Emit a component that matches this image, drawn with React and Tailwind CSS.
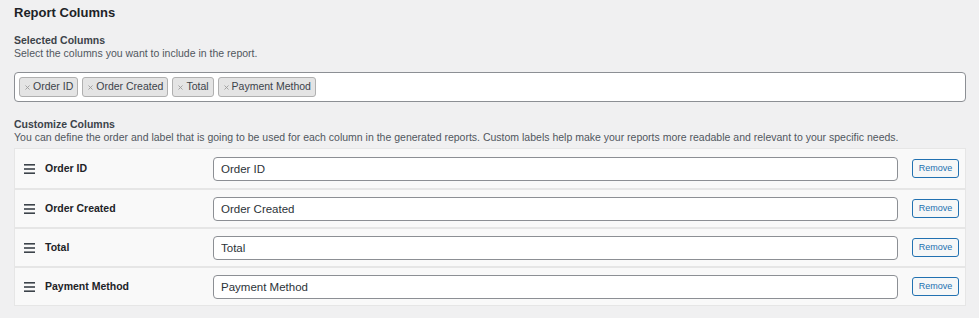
import { X } from "lucide-react";

const columns = ["Order ID", "Order Created", "Total", "Payment Method"];

function DragHandle() {
  return (
    <svg viewBox="0 0 11 10" className="w-[11px] h-[10px] flex-shrink-0" fill="#3c434a">
      <rect x="0" y="0" width="11" height="1.6" />
      <rect x="0" y="4.2" width="11" height="1.6" />
      <rect x="0" y="8.4" width="11" height="1.6" />
    </svg>
  );
}

export default function App() {
  return (
    <div
      className="w-[979px] h-[318px] bg-[#f0f0f1] text-[#1d2327] px-[14px] pt-[5px]"
      style={{ fontFamily: "'Liberation Sans', Arial, sans-serif" }}
    >
      <h2 className="text-[13px] font-bold leading-[16px]">Report Columns</h2>

      {/* Selected */}
      <div className="mt-[13px]">
        <div className="text-[10.5px] font-bold leading-[13px] text-[#3c434a]">Selected Columns</div>
        <div className="text-[10.5px] leading-[13px] text-[#50575e]">Select the columns you want to include in the report.</div>
        <div className="mt-[12px] w-[952px] h-[30px] bg-white border border-[#8c8f94] rounded-[4px] flex items-center gap-[4px] px-[4px]">
          {columns.map(c => (
            <span
              key={c}
              className="h-[20px] flex items-center gap-[2px] px-[4px] bg-[#e4e4e4] border border-[#b0b0b0] rounded-[3px] text-[10.5px] text-[#3c434a]"
            >
              <X className="w-[7px] h-[7px] text-[#999]" strokeWidth={3} />
              {c}
            </span>
          ))}
        </div>
      </div>

      {/* Customize */}
      <div className="mt-[16px]">
        <div className="text-[10.5px] font-bold leading-[13px] text-[#3c434a]">Customize Columns</div>
        <div className="text-[10.5px] leading-[13px] text-[#50575e]">
          You can define the order and label that is going to be used for each column in the generated reports. Custom labels help make your reports more readable and relevant to your specific needs.
        </div>
        <div className="mt-[4px] w-[952px] bg-[#f9f9f9] border border-[#e6e6e6]">
          {columns.map((c, i) => (
            <div
              key={c}
              className={`h-[39px] flex items-center ${i > 0 ? "border-t-2 border-[#e6e6e6]" : ""}`}
            >
              <div className="w-[198px] flex items-center gap-[10px] pl-[9px]">
                <DragHandle />
                <span className="text-[10.5px] font-bold text-[#1d2327]">{c}</span>
              </div>
              <input
                readOnly
                value={c}
                className="w-[685px] h-[24px] bg-white border border-[#8c8f94] rounded-[4px] px-[7px] text-[11.5px] text-[#2c3338] outline-none"
              />
              <button className="ml-[14px] w-[47px] h-[19px] border border-[#2271b1] rounded-[3px] bg-[#f6f7f7] text-[9px] text-[#2271b1] flex items-center justify-center">
                Remove
              </button>
            </div>
          ))}
        </div>
      </div>
    </div>
  );
}
